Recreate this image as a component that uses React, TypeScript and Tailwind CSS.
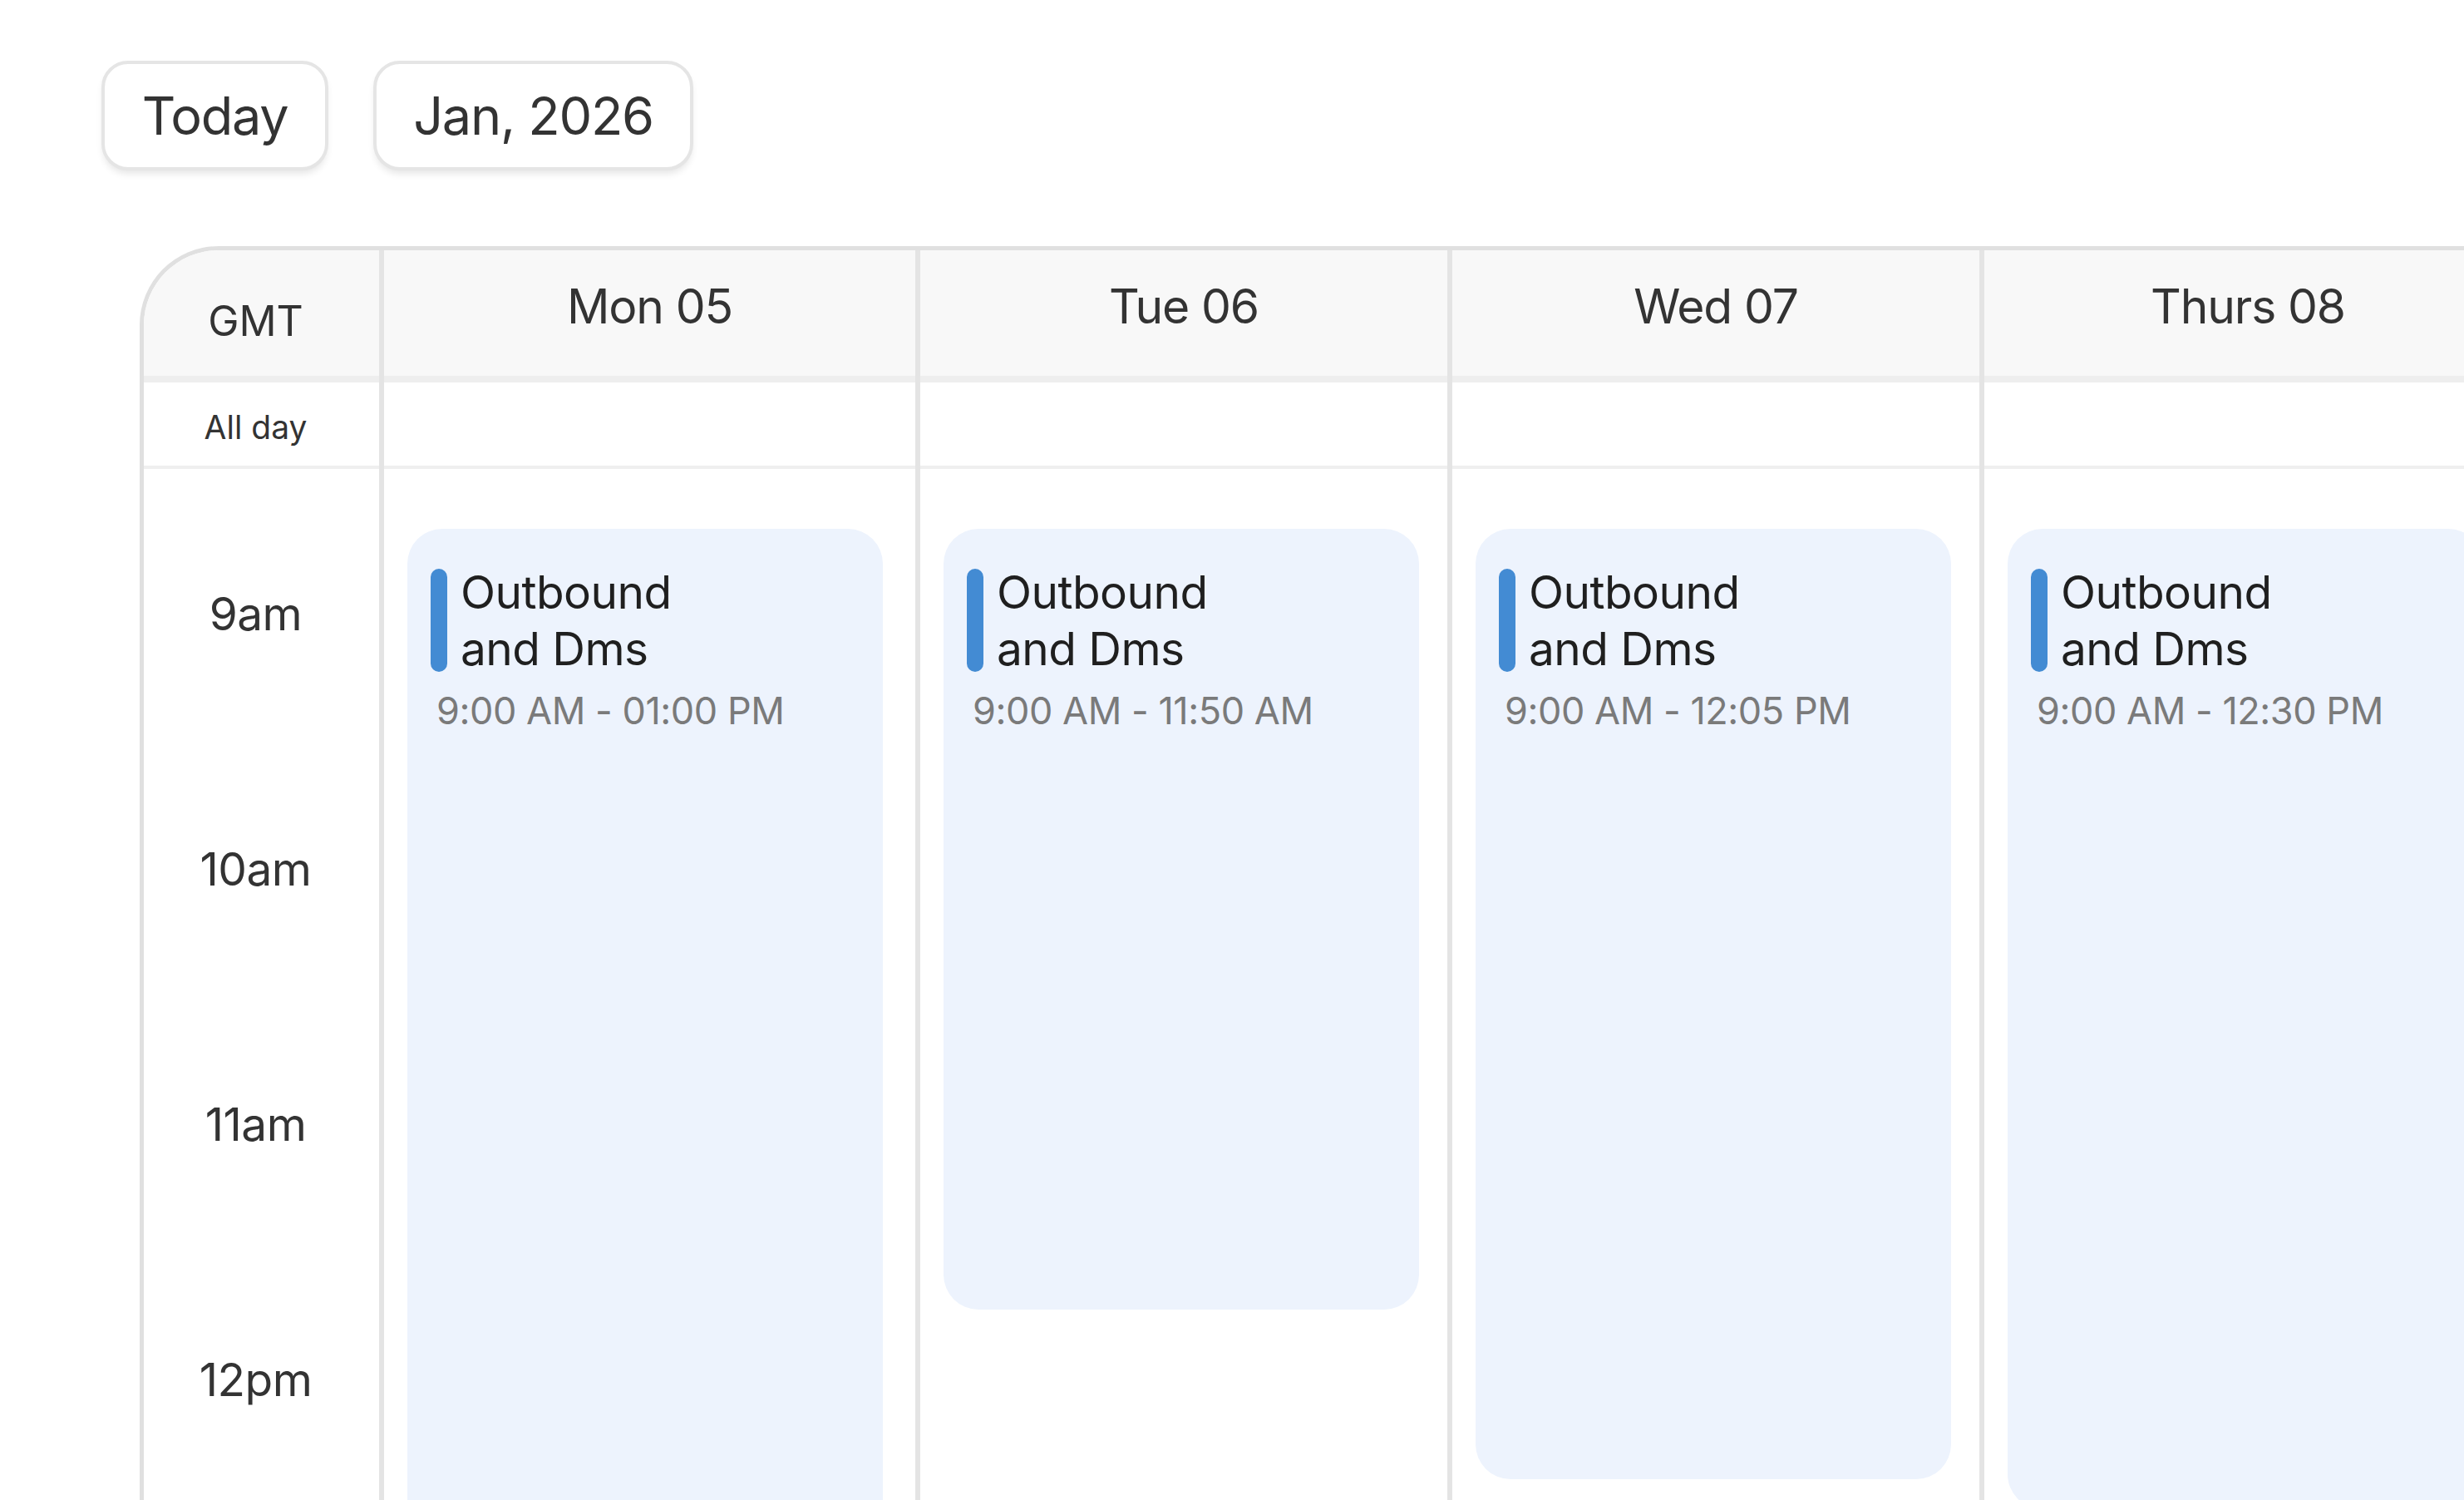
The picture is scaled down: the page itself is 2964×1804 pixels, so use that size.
import React from "react";

interface CalEvent {
    title: string;
    time: string;
    height: number;
}

interface Day {
    label: string;
    width: string;
    event: CalEvent;
}

const days: Day[] = [
    { label: "Mon 05", width: "w-[645px]", event: { title: "Outbound and Dms", time: "9:00 AM - 01:00 PM", height: 1400 } },
    { label: "Tue 06", width: "w-[640px]", event: { title: "Outbound and Dms", time: "9:00 AM - 11:50 AM", height: 939 } },
    { label: "Wed 07", width: "w-[640px]", event: { title: "Outbound and Dms", time: "9:00 AM - 12:05 PM", height: 1143 } },
    { label: "Thurs 08", width: "w-[640px]", event: { title: "Outbound and Dms", time: "9:00 AM - 12:30 PM", height: 1179 } },
];

const hours = ["9am", "10am", "11am", "12pm"];

function EventCard({ event }: { event: CalEvent }) {
    return (
        <div
            className="ml-[28px] w-[572px] rounded-[42px] bg-[#edf3fd] pl-[28px] pt-[42px]"
            style={{ height: event.height }}
        >
            <div className="flex gap-[16px]">
                <div className="my-[6px] w-[20px] shrink-0 rounded-full bg-[#438bd3]" />
                <div className="max-w-[300px] text-[55px] leading-[68px] tracking-[-0.01em] text-[#1f1f1f]">
                    {event.title}
                </div>
            </div>
            <div className="mt-[13px] pl-[7px] text-[45px] leading-[56px] tracking-[-0.01em] text-[#7a7a7a]">
                {event.time}
            </div>
        </div>
    );
}

export default function App() {
    return (
        <div className="h-[1804px] w-[2964px] overflow-hidden bg-white font-['Inter','Liberation_Sans',sans-serif]">
            {/* Toolbar */}
            <div className="flex gap-[54px] pl-[122px] pt-[73px]">
                <button className="flex h-[132px] w-[273px] items-center justify-center rounded-[32px] border-4 border-[#e5e5e5] bg-white text-[63px] tracking-[-0.02em] text-[#333333] shadow-[0_6px_8px_-2px_rgba(0,0,0,0.1)]">
                    Today
                </button>
                <button className="flex h-[132px] w-[385px] items-center justify-center rounded-[32px] border-4 border-[#e5e5e5] bg-white text-[63px] tracking-[-0.02em] text-[#333333] shadow-[0_6px_8px_-2px_rgba(0,0,0,0.1)]">
                    Jan, 2026
                </button>
            </div>

            {/* Week grid */}
            <div className="ml-[168px] mt-[91px] flex w-[3200px] overflow-hidden rounded-tl-[95px] border-l-[5px] border-t-[5px] border-[#e0e0e0]">
                {/* Time column */}
                <div className="flex w-[283px] shrink-0 flex-col text-[#333333]">
                    <div className="h-[159px] border-b-[8px] border-[#eeeeee] bg-[#f8f8f8] pr-[14px] pt-[55px] text-center text-[50px] leading-[60px]">
                        GMT
                    </div>
                    <div className="h-[104px] border-b-4 border-[#efefef] pr-[14px] pt-[30px] text-center text-[39px] leading-[48px]">
                        All day
                    </div>
                    <div className="pt-[21px]">
                        {hours.map((h) => (
                            <div key={h} className="flex h-[307px] items-center justify-center pr-[14px] text-[55px] tracking-[-0.01em]">
                                {h}
                            </div>
                        ))}
                    </div>
                </div>

                {/* Day columns */}
                {days.map((day) => (
                    <div key={day.label} className={`${day.width} flex shrink-0 flex-col border-l-[6px] border-[#e4e4e4]`}>
                        <div className="h-[159px] border-b-[8px] border-[#eeeeee] bg-[#f8f8f8] pt-[34px] text-center text-[57px] leading-[68px] tracking-[-0.02em] text-[#333333]">
                            {day.label}
                        </div>
                        <div className="h-[104px] border-b-4 border-[#efefef]" />
                        <div className="pt-[72px]">
                            <EventCard event={day.event} />
                        </div>
                    </div>
                ))}
            </div>
        </div>
    );
}
